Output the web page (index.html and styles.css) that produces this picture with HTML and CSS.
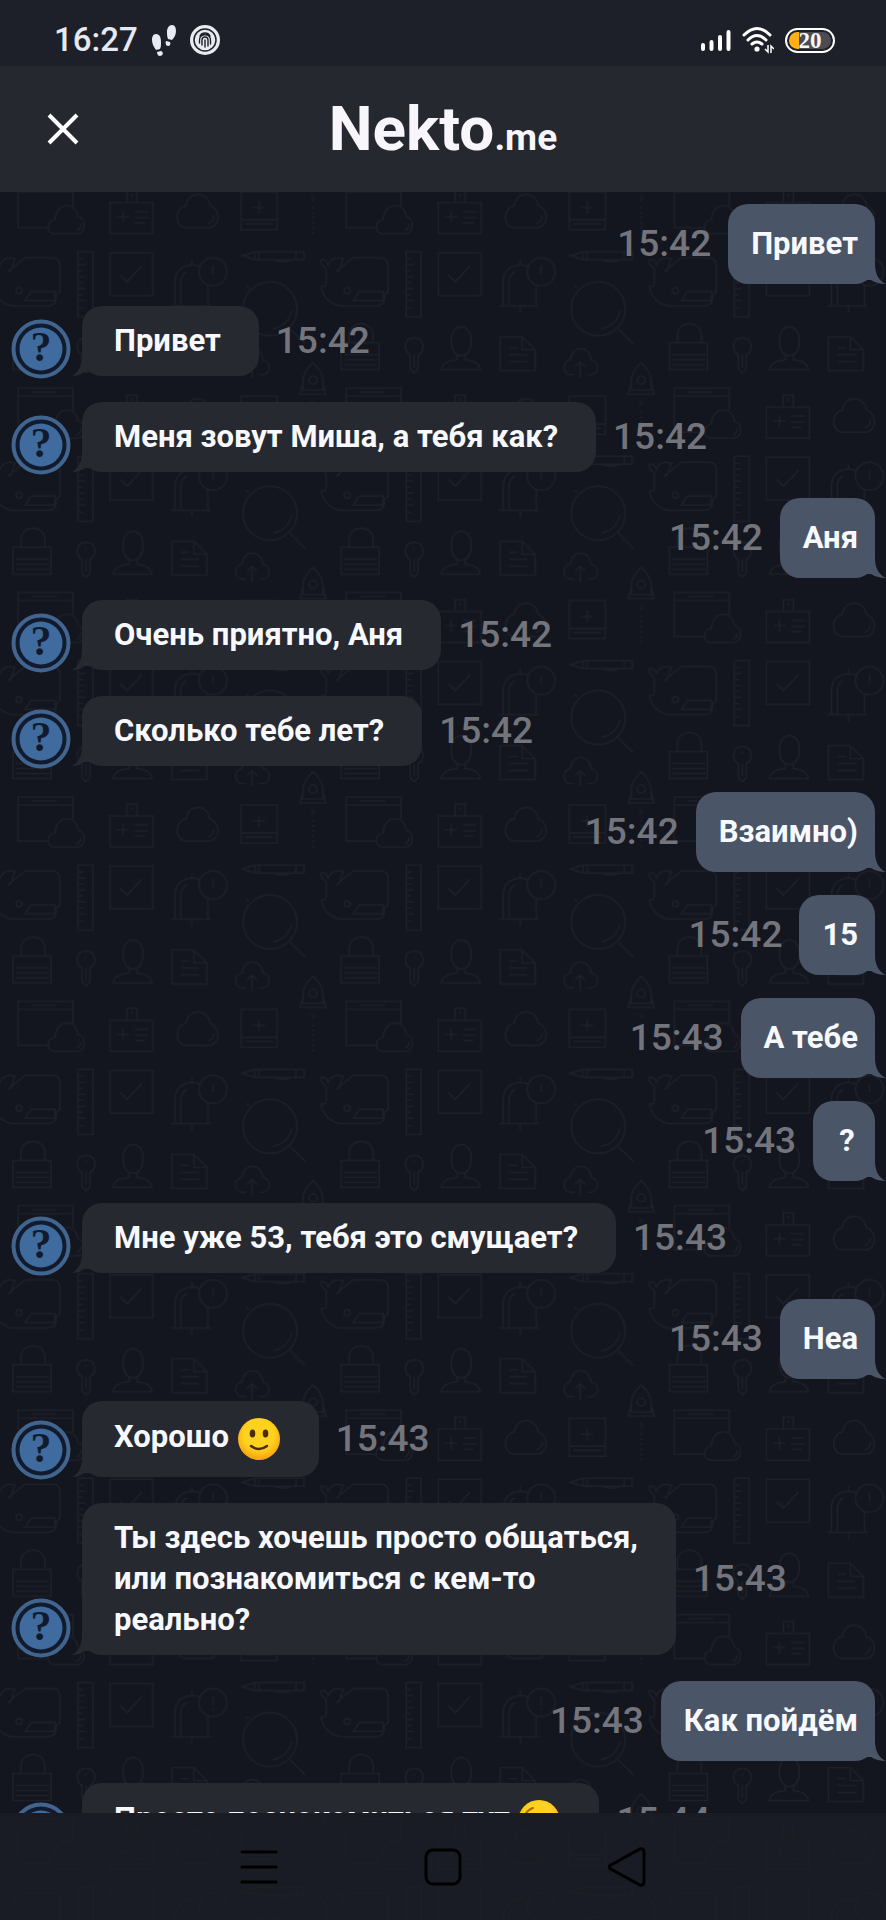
FILE: index.html
```html
<!DOCTYPE html>
<html lang="ru">
<head>
<meta charset="utf-8">
<meta name="viewport" content="width=device-width, initial-scale=1">
<title>Nekto.me</title>
<link rel="stylesheet" href="styles.css">
</head>
<body>
<svg class="wallpaper" aria-hidden="true">
  <defs>
    <g id="rocket">
      <path d="M312 9V1c0-8 4-14 10-19 6 5 10 11 10 19v8M312 2l-3 11h26l-3-11M311 9h22"/>
      <circle cx="322" cy="-1" r="4"/>
      <path d="M320 20h4l-2 5zM322 30v28" stroke-dasharray="2 3"/>
    </g>
    <pattern id="doodles" x="-9" y="176.8" width="328.2" height="204.4" patternUnits="userSpaceOnUse">
      <g class="doodle">
        <path d="M82 29V7H27v44h30M27 15h55M41 11h25"/>
        <path d="M63 57c-8-1-8-13 1-14 1-18 21-19 23-3 9 2 8 17-1 17zM85 54q5-2 5-7"/>
        <path d="M119 26h43v31h-43zM136 26V14h10v12M141 17v3M132 34v12M126 40h12M144 35h13M144 41h13M144 46h10"/>
        <path d="M196 51c-13 0-13-20-1-22 2-16 22-15 24 0 11 3 11 22-2 22zM217 47q6-2 6-8"/>
        <path d="M250 15h36v38h-36zM250 43h36M254 47h28M268 25v12M262 31h12"/>
        <path d="M7 108v-16c-4-3-6-6-5-9q5-1 7 5c3-7 9-8 15-6-4 8-2 12-7 13M18 94l16-13h27q8 0 8 8v26l-4 3v4q0 7-8 7H20Q5 125 2 110l5-1M40 115h24v9H34zM34 124l6-9"/>
        <circle cx="28" cy="114" r="3"/>
        <path d="M87 75h15v65H87zM87 82h5M87 88h7M87 94h5M87 100h7M87 106h5M87 112h7M87 118h5M87 124h7M87 131h5"/>
        <path d="M119 76h43v43h-43zM129 98l7 7 15-16"/>
        <path d="M184 129v-25q1-14 16-16 6 0 9 2M217 108v21M180 129h40M190 129v-26q1-6 6-8M201 83v5M201 130v6"/>
        <circle cx="222" cy="95" r="14"/><path d="M222 89v9M222 101v1"/>
        <path d="M251 79l13-4h49v8h-49zM264 75v8M268 75v8M305 75v8M283 83q9 4 17 0"/>
        <circle cx="279" cy="132" r="27"/><path d="M299 152l15 15M282 152q15-3 19-18M255 109l3 2"/>
        <path d="M22 166h38v27H22zM30 166v-8c1-15 23-15 24 0v8M25 178h33M25 183h33M25 188h33"/>
        <path d="M91 178c-7-3-7-17 4-17s11 14 4 17v14l-4 4-4-4zM95 178v13M95 166v2"/>
        <path d="M132 165c-1-20 21-20 20 0 0 8-4 14-10 14s-10-6-10-14zM138 179v4c-9 1-15 3-16 10h39c-1-7-7-9-15-10v-4"/>
        <path d="M181 160h22l13 13v21h-35zM203 160v13h13M190 171h8M190 178h18M190 185h18"/>
        <path d="M255 198h-3c-9 0-10-13-1-15 2-15 19-15 21 0 9 2 8 15-1 15h-3M261 201v-16M256 190l5-5 5 5"/>
        <use href="#rocket"/>
        <use href="#rocket" y="204.4"/>
        <use href="#rocket" x="-328.2"/>
        <use href="#rocket" x="-328.2" y="204.4"/>
      </g>
    </pattern>
    <symbol id="avatar" viewBox="0 0 60 60">
      <circle cx="30" cy="30" r="29" fill="#121b2e"/>
      <circle cx="30" cy="30" r="27.5" fill="none" stroke="#41658f" stroke-width="4"/>
      <circle cx="30" cy="30" r="21.5" fill="#3f6b9f"/>
      <text class="avatar-mark" x="30" y="42" text-anchor="middle">?</text>
    </symbol>
    <radialGradient id="face" cx=".5" cy=".4" r=".6">
      <stop offset=".6" stop-color="#ffd21f"/>
      <stop offset="1" stop-color="#f9a10f"/>
    </radialGradient>
    <symbol id="smile" viewBox="0 0 44 44">
      <circle cx="22" cy="22" r="21" fill="url(#face)"/>
      <ellipse cx="15.500" cy="16.500" rx="2.800" ry="4" fill="#4a2b0c"/>
      <ellipse cx="28.500" cy="16.500" rx="2.800" ry="4" fill="#4a2b0c"/>
      <path d="M14 29q8 6 16 0" fill="none" stroke="#4a2b0c" stroke-width="2.500" stroke-linecap="round"/>
    </symbol>
    <symbol id="wink" viewBox="0 0 44 44">
      <circle cx="22" cy="22" r="21" fill="url(#face)"/>
      <path d="M9 14q3-4 7-5M12 19q4-4 8 0M14 29q8 6 16 0" fill="none" stroke="#a8660d" stroke-width="2" stroke-linecap="round"/>
      <ellipse cx="29" cy="18" rx="3" ry="4" fill="#4a2b0c"/>
    </symbol>
    <symbol id="tail-in" viewBox="0 0 20 20"><path d="M10 0C10 10 6 17 0 20q8 0 12-4h8V0z"/></symbol>
    <symbol id="tail-out" viewBox="0 0 20 20"><path d="M9 0c0 10 4 17 11 20q-9 0-15-4H0V0z"/></symbol>
  </defs>
  <rect width="100%" height="100%" fill="url(#doodles)"/>
</svg>

<div class="status">
  <div class="status-group">
    <span class="clock">16:27</span>
    <svg class="steps" viewBox="0 0 24 32" aria-hidden="true">
      <path d="M4 10c4 0 5 4 5 8 0 3 0 5-1 7l-4 1c-2-3-4-6-4-10 0-3 1-6 4-6zM5 28l4-1c3 1 2 5-1 5-2 0-3-2-3-4zM20 1c3 0 4 3 4 6 0 4-2 7-4 9l-4-1c-1-2-1-5-1-7 0-4 2-7 5-7zM14 17l4 1c1 2 0 4-2 4s-3-3-2-5z"/>
    </svg>
    <svg class="finger" viewBox="0 0 30 30" aria-hidden="true">
      <circle cx="15" cy="15" r="15" fill="#e9ebf2"/>
      <circle cx="15" cy="15" r="11" fill="none" stroke="#1d2028" stroke-width="1.500"/>
      <path d="M9.500 18v-3c0-7 11-7 11 0v4M12 20v-5c0-4 6-4 6 0v6M15 15v7M10 11c2-4 8-4 10 0" fill="none" stroke="#1d2028" stroke-width="1.400" stroke-linecap="round"/>
    </svg>
  </div>
  <div class="status-group">
    <svg class="signal" viewBox="0 0 30 22" aria-hidden="true"><path d="M2 16v4M10.500 13v7M19 8v12M27.500 3v17"/></svg>
    <svg class="wifi" viewBox="0 0 32 28" aria-hidden="true">
      <path d="M2 9q13-13 26 0M6 14q9-9 18 0M10 18q5-4 10 0" fill="none" stroke="#fff" stroke-width="3" stroke-linecap="round"/>
      <circle cx="15" cy="23" r="2.600" fill="#fff"/>
      <path d="M26 19v7l-3-3M29 27v-7l3 3" fill="none" stroke="#fff" stroke-width="1.500"/>
    </svg>
    <span class="battery">20</span>
  </div>
</div>

<header class="header">
  <button class="close" type="button" aria-label="Закрыть">
    <svg viewBox="0 0 32 32" aria-hidden="true"><path d="M2 2l28 28M30 2L2 30"/></svg>
  </button>
  <h1 class="logo">Nekto<span class="logo-zone">.me</span></h1>
</header>

<main class="chat">
  <div class="message message--out"><time class="time">15:42</time><p class="bubble">Привет<svg class="tail"><use href="#tail-out"/></svg></p></div>
  <div class="message"><svg class="avatar"><use href="#avatar"/></svg><p class="bubble">Привет<svg class="tail"><use href="#tail-in"/></svg></p><time class="time">15:42</time></div>
  <div class="message"><svg class="avatar"><use href="#avatar"/></svg><p class="bubble">Меня зовут Миша, а тебя как?<svg class="tail"><use href="#tail-in"/></svg></p><time class="time">15:42</time></div>
  <div class="message message--out"><time class="time">15:42</time><p class="bubble">Аня<svg class="tail"><use href="#tail-out"/></svg></p></div>
  <div class="message"><svg class="avatar"><use href="#avatar"/></svg><p class="bubble">Очень приятно, Аня<svg class="tail"><use href="#tail-in"/></svg></p><time class="time">15:42</time></div>
  <div class="message"><svg class="avatar"><use href="#avatar"/></svg><p class="bubble">Сколько тебе лет?<svg class="tail"><use href="#tail-in"/></svg></p><time class="time">15:42</time></div>
  <div class="message message--out"><time class="time">15:42</time><p class="bubble">Взаимно)<svg class="tail"><use href="#tail-out"/></svg></p></div>
  <div class="message message--out"><time class="time">15:42</time><p class="bubble">15<svg class="tail"><use href="#tail-out"/></svg></p></div>
  <div class="message message--out"><time class="time">15:43</time><p class="bubble">А тебе<svg class="tail"><use href="#tail-out"/></svg></p></div>
  <div class="message message--out"><time class="time">15:43</time><p class="bubble">?<svg class="tail"><use href="#tail-out"/></svg></p></div>
  <div class="message"><svg class="avatar"><use href="#avatar"/></svg><p class="bubble">Мне уже 53, тебя это смущает?<svg class="tail"><use href="#tail-in"/></svg></p><time class="time">15:43</time></div>
  <div class="message message--out"><time class="time">15:43</time><p class="bubble">Неа<svg class="tail"><use href="#tail-out"/></svg></p></div>
  <div class="message"><svg class="avatar"><use href="#avatar"/></svg><p class="bubble">Хорошо <svg class="emoji" role="img" aria-label="улыбка"><use href="#smile"/></svg><svg class="tail"><use href="#tail-in"/></svg></p><time class="time">15:43</time></div>
  <div class="message"><svg class="avatar"><use href="#avatar"/></svg><p class="bubble">Ты здесь хочешь просто общаться,<br>или познакомиться с кем-то<br>реально?<svg class="tail"><use href="#tail-in"/></svg></p><time class="time">15:43</time></div>
  <div class="message message--out"><time class="time">15:43</time><p class="bubble">Как пойдём<svg class="tail"><use href="#tail-out"/></svg></p></div>
  <div class="message"><svg class="avatar"><use href="#avatar"/></svg><p class="bubble">Просто познакомиться тут <svg class="emoji" role="img" aria-label="подмигивание"><use href="#wink"/></svg><svg class="tail"><use href="#tail-in"/></svg></p><time class="time">15:44</time></div>
</main>

<nav class="navbar" aria-label="Система">
  <button class="nav-key" type="button" aria-label="Меню"><svg viewBox="0 0 40 40"><path d="M3 5h34M3 20h34M3 35h34"/></svg></button>
  <button class="nav-key" type="button" aria-label="Домой"><svg viewBox="0 0 40 40"><rect x="3" y="3" width="34" height="34" rx="7"/></svg></button>
  <button class="nav-key" type="button" aria-label="Назад"><svg viewBox="0 0 40 40"><path d="M3 18.500L33 2q4-1 4 3v30q0 4-4 3L3 21.500q-1-1.500 0-3z"/></svg></button>
</nav>
</body>
</html>
```
FILE: styles.css
```css
* {
  box-sizing: border-box;
}

body {
  position: relative;
  display: flex;
  flex-direction: column;
  height: 100vh;
  margin: 0;
  overflow: hidden;
  background: #13161e;
  color: #f8f9ff;
  font-family: Roboto, "Noto Sans", sans-serif;
}

button {
  padding: 0;
  border: 0;
  background: none;
  cursor: pointer;
}

svg {
  display: block;
}

.wallpaper {
  position: absolute;
  inset: 0;
  z-index: -1;
  width: 100%;
  height: 100%;
}

.doodle {
  fill: none;
  stroke: #1d2028;
  stroke-width: 1.5;
}

.avatar-mark {
  fill: #121b2e;
  font: bold 42px "Liberation Serif", serif;
}

.status {
  display: flex;
  flex: none;
  align-items: center;
  justify-content: space-between;
  height: 66px;
  padding: 14px 51px 0 54px;
  background: #1d2028;
}

.status-group {
  display: flex;
  align-items: center;
  gap: 14px;
}

.status-group + .status-group {
  gap: 11px;
}

.clock {
  color: #e6e9f2;
  font-size: 33px;
  font-weight: 500;
  line-height: 40px;
}

.steps {
  width: 24px;
  height: 32px;
  fill: #e9ebf2;
}

.finger {
  width: 30px;
  height: 30px;
}

.signal {
  width: 30px;
  height: 22px;
  fill: none;
  stroke: #fff;
  stroke-width: 4;
  stroke-linecap: round;
}

.wifi {
  width: 32px;
  height: 28px;
}

.battery {
  width: 50px;
  height: 25px;
  padding: 2px;
  border: 2px solid #fff;
  border-radius: 13px;
  background: linear-gradient(90deg, #ffb014 10px, #4b4b52 10px) content-box;
  font: bold 23px/17px "Liberation Serif", serif;
  text-align: center;
}

.header {
  display: grid;
  flex: none;
  grid-template-columns: 1fr auto 1fr;
  align-items: center;
  height: 126px;
  padding: 0 47px;
  background: #25282f;
}

.close {
  width: 32px;
  height: 32px;
}

.close svg {
  width: 32px;
  height: 32px;
  stroke: #fff;
  stroke-width: 4;
}

.logo {
  margin: 0;
  padding-top: 8px;
  color: #f8f6fb;
  font-size: 62px;
  font-weight: 700;
  line-height: 72px;
}

.logo-zone {
  font-size: 37px;
}

.chat {
  flex: 1;
  min-height: 0;
  overflow: hidden;
  padding: 12px 11px 0;
}

.message {
  display: flex;
  align-items: center;
  margin-bottom: 26px;
}

.message--out {
  justify-content: flex-end;
  margin-bottom: 22px;
}

.message--out + .message--out {
  margin-top: 23px;
}

.avatar {
  flex: none;
  align-self: flex-end;
  width: 60px;
  height: 60px;
  margin: 0 11px -3px 0;
}

.bubble {
  position: relative;
  margin: 0;
  padding: 14px 38px 15px 32px;
  border-radius: 20px;
  background: #272930;
  fill: #272930;
  font-size: 31px;
  font-weight: 700;
  line-height: 41px;
}

.message--out .bubble {
  min-width: 62px;
  padding: 19px 17px 20px 23px;
  background: #4a5567;
  fill: #4a5567;
  text-align: center;
}

.tail {
  position: absolute;
  bottom: 0;
  left: -10px;
  width: 20px;
  height: 20px;
}

.message--out .tail {
  right: -11px;
  left: auto;
}

.emoji {
  display: inline-block;
  width: 44px;
  height: 44px;
  margin: 2px 0 1px;
  vertical-align: middle;
}

.time {
  margin: 0 17px;
  color: #74757c;
  font-size: 37px;
  font-weight: 500;
  line-height: 44px;
}

.navbar {
  display: flex;
  flex: none;
  align-items: center;
  justify-content: center;
  gap: 144px;
  height: 107px;
  background: rgba(28, 30, 38, 0.8);
}

.nav-key {
  width: 40px;
  height: 40px;
}

.nav-key svg {
  width: 40px;
  height: 40px;
  fill: none;
  stroke: #000;
  stroke-width: 3;
  stroke-linecap: round;
}
```
